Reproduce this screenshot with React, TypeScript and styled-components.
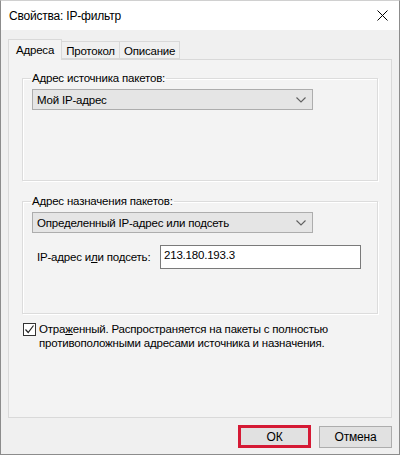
import React from "react";
import styled, { createGlobalStyle } from "styled-components";

const Global = createGlobalStyle`
  html, body { margin: 0; padding: 0; background: #ffffff; }
  body { font-family: "Liberation Sans", Arial, sans-serif; font-size: 11.5px; letter-spacing: -0.2px; color: #000; }
  * { box-sizing: border-box; }
`;

const Window = styled.div`
  width: 400px;
  height: 455px;
  background: #f0f0f0;
  border: 1px solid #8c8c8c;
  border-top-color: #d0d0d0;
  display: flex;
  flex-direction: column;
`;

const TitleBar = styled.div`
  height: 29px;
  background: #ffffff;
  display: flex;
  align-items: center;
  justify-content: space-between;
  padding: 0 11px 0 8px;
  font-size: 12px;
  letter-spacing: -0.2px;
`;

const Body = styled.div`
  flex: 1;
  display: flex;
  flex-direction: column;
  padding: 8px 7px 0 7px;
`;

const TabStrip = styled.div`
  display: flex;
  align-items: flex-end;
  height: 21px;
  position: relative;
  z-index: 1;
`;

const Tab = styled.div<{ $active?: boolean }>`
  height: ${(p) => (p.$active ? "21px" : "18px")};
  margin-bottom: ${(p) => (p.$active ? "-1px" : "0")};
  padding: 0 ${(p) => (p.$active ? "7px" : "4px")};
  padding-top: ${(p) => (p.$active ? "0" : "1px")};
  border: 1px solid #d9d9d9;
  border-bottom: ${(p) => (p.$active ? "none" : "1px solid #d9d9d9")};
  margin-left: -1px;
  background: ${(p) => (p.$active ? "#f3f3f3" : "#f0f0f0")};
  display: flex;
  align-items: center;
  &:first-child { margin-left: 0; }
`;

const Panel = styled.div`
  height: 359px;
  border: 1px solid #d9d9d9;
  background: #f3f3f3;
  padding: 11px 13px 0 13px;
  display: flex;
  flex-direction: column;
`;

const Group = styled.fieldset<{ $h: number; $gap?: number }>`
  margin: ${(p) => p.$gap ?? 0}px 0 0 0;
  height: ${(p) => p.$h}px;
  border: 1px solid #dcdcdc;
  box-shadow: inset 1px 1px 0 #ffffff, 1px 1px 0 #ffffff;
  padding: 4px 9px 0 9px;
  display: flex;
  flex-direction: column;
  min-width: 0;
`;

const Legend = styled.legend`
  padding: 0 1px;
  margin-left: -1px;
  line-height: 14px;
`;

const Combo = styled.div`
  width: 281px;
  height: 21px;
  border: 1px solid #adadad;
  background: #e5e5e5;
  display: flex;
  align-items: center;
  justify-content: space-between;
  padding: 0 6px 0 4px;
`;

const Chevron = () => (
  <svg width="10" height="6" viewBox="0 0 10 6">
    <path d="M0.5 0.5 L5 5 L9.5 0.5" fill="none" stroke="#606060" strokeWidth="1.1" />
  </svg>
);

const FieldRow = styled.div`
  display: flex;
  align-items: center;
  margin-top: 12px;
  padding-left: 5px;
`;

const FieldLabel = styled.span`
  width: 123px;
`;

const TextInput = styled.div`
  width: 201px;
  height: 24px;
  border: 1px solid #7a7a7a;
  background: #ffffff;
  padding: 2px 3px;
  line-height: 14px;
`;

const CheckRow = styled.div`
  display: flex;
  align-items: flex-start;
  margin-top: 9px;
  margin-left: 1px;
`;

const CheckBox = styled.div`
  width: 13px;
  height: 13px;
  border: 1px solid #333333;
  background: #ffffff;
  flex: none;
  display: flex;
  align-items: center;
  justify-content: center;
`;

const CheckText = styled.div`
  margin-left: 3px;
  line-height: 14px;
  margin-top: -1px;
`;

const Footer = styled.div`
  display: flex;
  justify-content: flex-end;
  align-items: center;
  gap: 8px;
  padding: 7px 0 0 0;
`;

const Button = styled.div<{ $focus?: boolean }>`
  width: 73px;
  height: ${(p) => (p.$focus ? "23px" : "22px")};
  border: ${(p) => (p.$focus ? "3px solid #d51a35" : "1px solid #adadad")};
  background: #e1e1e1;
  display: flex;
  align-items: center;
  justify-content: center;
  font-size: 12px;
`;

const U = styled.span`
  text-decoration: underline;
`;

export default function App() {
  return (
    <>
      <Global />
      <Window>
        <TitleBar>
          <span>Свойства: IP-фильтр</span>
          <svg width="11" height="11" viewBox="0 0 11 11">
            <path d="M0.5 0.5 L10.5 10.5 M10.5 0.5 L0.5 10.5" stroke="#000" strokeWidth="1" />
          </svg>
        </TitleBar>
        <Body>
          <TabStrip>
            <Tab $active>Адреса</Tab>
            <Tab>Протокол</Tab>
            <Tab>Описание</Tab>
          </TabStrip>
          <Panel>
            <Group $h={110}>
              <Legend>Адрес источника пакетов:</Legend>
              <Combo>
                <span>Мой IP-адрес</span>
                <Chevron />
              </Combo>
            </Group>
            <Group $h={120} $gap={13}>
              <Legend>Адрес назначения пакетов:</Legend>
              <Combo>
                <span>Определенный IP-адрес или подсеть</span>
                <Chevron />
              </Combo>
              <FieldRow>
                <FieldLabel>
                  IP-адрес и<U>л</U>и подсеть:
                </FieldLabel>
                <TextInput>213.180.193.3</TextInput>
              </FieldRow>
            </Group>
            <CheckRow>
              <CheckBox>
                <svg width="11" height="11" viewBox="0 0 11 11">
                  <path d="M1.5 5.5 L4.2 8.5 L9.5 1.5" fill="none" stroke="#222" strokeWidth="1.2" />
                </svg>
              </CheckBox>
              <CheckText>
                Отра<U>ж</U>енный. Распространяется на пакеты с полностью
                <br />
                противоположными адресами источника и назначения.
              </CheckText>
            </CheckRow>
          </Panel>
          <Footer>
            <Button $focus>ОК</Button>
            <Button>Отмена</Button>
          </Footer>
        </Body>
      </Window>
    </>
  );
}
